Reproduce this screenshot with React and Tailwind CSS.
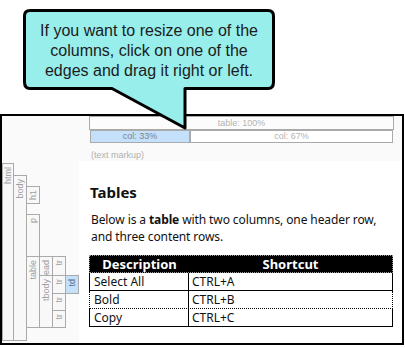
import React from "react";

const nodes = [
  { t: "html", x: 0, y: 2, w: 12, h: 178 },
  { t: "body", x: 11, y: 14, w: 14, h: 166 },
  { t: "h1", x: 24, y: 25, w: 14, h: 18 },
  { t: "p", x: 24, y: 53, w: 14, h: 43 },
  { t: "table", x: 24, y: 95, w: 14, h: 72 },
  { t: "thead", x: 37, y: 95, w: 14, h: 20 },
  { t: "tr", x: 50, y: 95, w: 14, h: 20 },
  { t: "tbody", x: 37, y: 114, w: 14, h: 53 },
  { t: "tr", x: 50, y: 114, w: 14, h: 19 },
  { t: "td", x: 63, y: 114, w: 14, h: 19, sel: true },
  { t: "tr", x: 50, y: 132, w: 14, h: 18 },
  { t: "tr", x: 50, y: 149, w: 14, h: 18 },
];

const rows = [
  ["Select All", "CTRL+A", "border-black"],
  ["Bold", "CTRL+B", "border-dotted border-[#b0b0b0]"],
  ["Copy", "CTRL+C", "border-black"],
];

export default function App() {
  return (
    <div className="relative w-[405px] h-[348px] bg-white overflow-hidden pt-[114px]">
      <div className="w-[404px] h-[231px] border-2 border-black flex flex-col bg-white">
        <div className="h-[45px] bg-[#fafafa] pl-[87px] pr-[8px] flex flex-col font-['Liberation_Sans',sans-serif] text-[9px] leading-none">
          <div className="w-[305px] h-[14px] border border-[#aaaaaa] bg-[#fcfcfc] text-[#b4b4b4] flex items-center justify-center">
            table: 100%
          </div>
          <div className="flex ml-px h-[13px]">
            <div className="w-[100px] border border-[#aaaaaa] bg-[#c4e0fb] text-[#7a8590] flex items-center justify-center">
              col: 33%
            </div>
            <div className="w-[203px] border border-[#aaaaaa] bg-white text-[#b4b4b4] flex items-center justify-center">
              col: 67%
            </div>
          </div>
          <div className="ml-[2px] mt-[8px] text-[#b0b0b0]">(text markup)</div>
        </div>
        <div className="flex-1 flex">
          <div className="relative w-[77px] bg-[#fafafa] overflow-hidden font-['Liberation_Sans',sans-serif]">
            {nodes.map((n, i) => (
              <div
                key={i}
                className={`absolute border border-[#aaaaaa] overflow-hidden flex items-start justify-center ${n.sel ? "bg-[#c4e0fb] text-[#5a6f88]" : "bg-[#f8f8f8] text-[#a0a0a0]"}`}
                style={{ left: n.x, top: n.y, width: n.w, height: n.h }}
              >
                <span className="shrink-0 [writing-mode:vertical-rl] rotate-180 text-[9px] leading-[12px] pb-[3px] whitespace-nowrap">
                  {n.t}
                </span>
              </div>
            ))}
          </div>
          <div className="flex-1 pl-[10px] pr-[9px] pt-[21px] font-['Noto_Sans',sans-serif] text-[#111]">
            <h1 className="text-[15px] font-bold leading-[20px] ml-[1px]">Tables</h1>
            <p className="mt-[9px] text-[12px] leading-[17px] ml-[2px] tracking-[-0.1px]">
              Below is a <b>table</b> with two columns, one header row, and three content rows.
            </p>
            <div className="mt-[10px] w-[304px] flex flex-col text-[12px]">
              <div className="h-[18px] bg-black border border-dotted border-[#999] flex text-white font-bold text-[13px] leading-none">
                <div className="w-[99px] flex items-center justify-center">Description</div>
                <div className="flex-1 flex items-center justify-center">Shortcut</div>
              </div>
              {rows.map((r, i) => (
                <div key={i} className={`h-[18px] flex border-x border-black border-b ${r[2]}`}>
                  <div className="w-[99px] border-r border-black pl-[4px] flex items-center leading-none">{r[0]}</div>
                  <div className="flex-1 pl-[3px] flex items-center leading-none">{r[1]}</div>
                </div>
              ))}
            </div>
          </div>
        </div>
      </div>

      <svg className="absolute left-0 top-0" width="405" height="140" viewBox="0 0 405 140">
        <path
          d="M30 10.5 H268 Q273.5 10.5 273.5 16 V82 Q273.5 88.5 268 88.5 H185 V128 L112 88.5 H30 Q24.5 88.5 24.5 82 V16 Q24.5 10.5 30 10.5 Z"
          fill="#98eeeb"
          stroke="#000"
          strokeWidth="3"
          strokeLinejoin="round"
        />
      </svg>
      <div className="absolute left-[24px] top-[21px] w-[250px] text-center font-['Liberation_Sans',sans-serif] text-[16px] leading-[20px] text-[#1c1c1c]">
        If you want to resize one of the
        <br />
        columns, click on one of the
        <br />
        edges and drag it right or left.
      </div>
    </div>
  );
}
